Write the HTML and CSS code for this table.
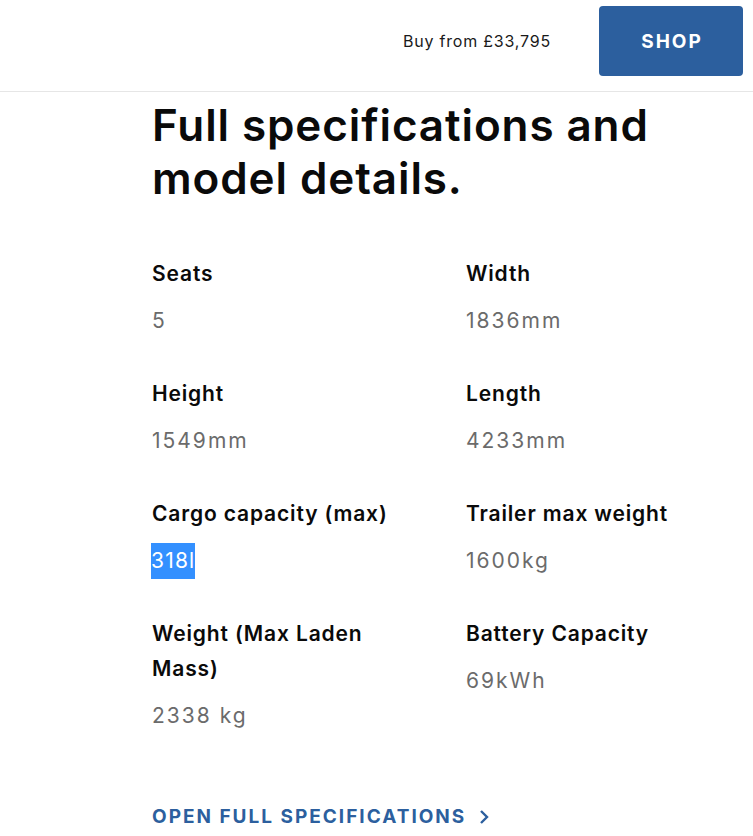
FILE: index.html
```html
<!DOCTYPE html>
<html lang="en">
<head>
<meta charset="utf-8">
<title>Full specifications</title>
<link rel="stylesheet" href="styles.css">
</head>
<body>
<header class="topbar">
  <span class="price">Buy from £33,795</span>
  <a class="shop" href="#">SHOP</a>
</header>
<main class="content">
  <h1 class="title">Full specifications and model details.</h1>
  <div class="specs">
    <div class="spec"><div class="label">Seats</div><div class="value">5</div></div>
    <div class="spec"><div class="label">Width</div><div class="value">1836mm</div></div>
    <div class="spec"><div class="label">Height</div><div class="value">1549mm</div></div>
    <div class="spec"><div class="label">Length</div><div class="value">4233mm</div></div>
    <div class="spec"><div class="label">Cargo capacity (max)</div><div class="value"><span class="selected">318l</span></div></div>
    <div class="spec"><div class="label">Trailer max weight</div><div class="value">1600kg</div></div>
    <div class="spec"><div class="label">Weight (Max Laden Mass)</div><div class="value">2338 kg</div></div>
    <div class="spec"><div class="label">Battery Capacity</div><div class="value">69kWh</div></div>
  </div>
  <a class="more" href="#"><span>OPEN FULL SPECIFICATIONS</span>
    <svg class="chev" width="10" height="16" viewBox="0 0 10 16"><path d="M2 2 L8 8 L2 14" fill="none" stroke="#2c5f9e" stroke-width="2.4"/></svg>
  </a>
</main>
</body>
</html>
```
FILE: styles.css
```css
* { box-sizing: border-box; }
body {
  margin: 0;
  background: #fff;
  font-family: Inter, "Noto Sans", sans-serif;
  color: #0a0a0a;
}
.topbar {
  height: 92px;
  display: flex;
  align-items: flex-start;
  justify-content: flex-end;
  border-bottom: 1px solid #e6e6e6;
  padding: 6px 10px 0 0;
}
.price {
  font-size: 16px;
  letter-spacing: 0.8px;
  color: #1a1a1a;
  margin-top: 25px;
  margin-right: 48px;
}
.shop {
  width: 144px;
  height: 70px;
  background: #2c5f9e;
  border-radius: 4px;
  color: #fff;
  text-decoration: none;
  font-weight: 700;
  font-size: 19px;
  letter-spacing: 2px;
  display: flex;
  align-items: center;
  justify-content: center;
  padding-left: 2px;
}
.content {
  padding-left: 152px;
  width: 720px;
}
.title {
  margin: 7px 0 0;
  font-size: 44px;
  line-height: 53px;
  font-weight: 600;
  letter-spacing: 0.9px;
  width: 540px;
}
.specs {
  display: grid;
  grid-template-columns: 314px 260px;
  row-gap: 37px;
  margin-top: 51px;
}
.label {
  font-size: 21px;
  line-height: 35px;
  font-weight: 600;
  letter-spacing: 0.85px;
  width: 250px;
}
.value {
  font-size: 21px;
  line-height: 36px;
  color: #6b6b6b;
  margin-top: 12px;
  font-weight: 400;
  letter-spacing: 2px;
}
.selected {
  background: #3390ff;
  color: #fff;
  display: inline-block;
  letter-spacing: 1.2px;
  margin-left: -1px;
}
.more {
  display: inline-flex;
  align-items: center;
  gap: 13px;
  margin-top: 71px;
  color: #2c5f9e;
  text-decoration: none;
  font-weight: 700;
  font-size: 19px;
  letter-spacing: 2px;
}
```
